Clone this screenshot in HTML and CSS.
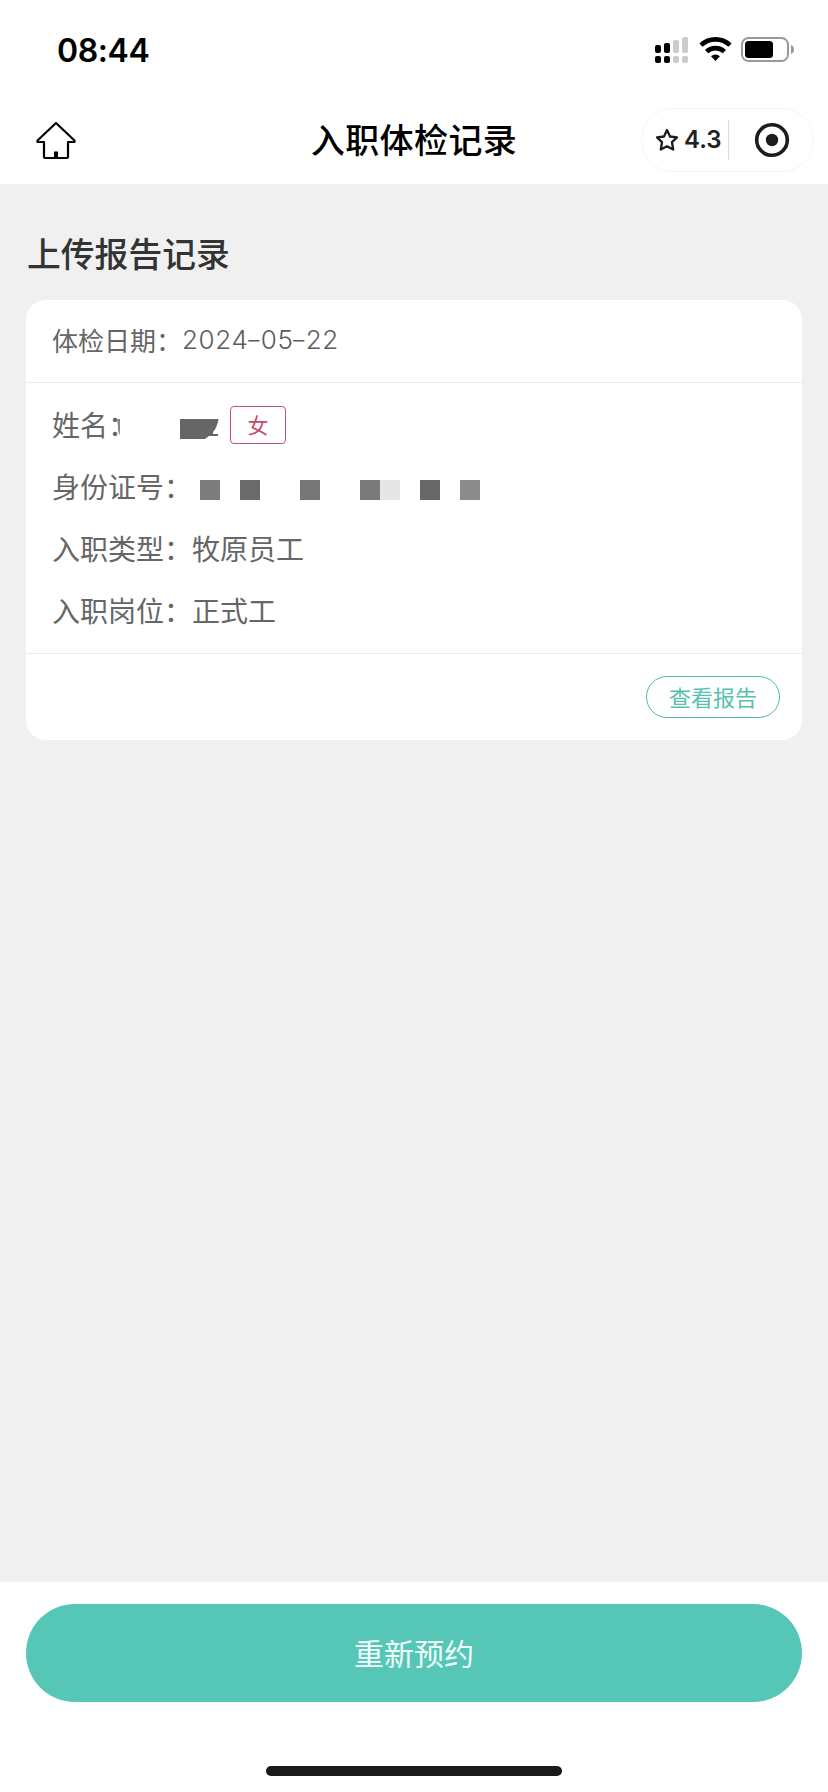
FILE: index.html
```html
<!DOCTYPE html>
<html lang="zh-CN">
<head>
<meta charset="utf-8">
<title>入职体检记录</title>
<link rel="stylesheet" href="styles.css">
</head>
<body>
<div class="app">
  <header class="header">
    <div class="status">
      <span class="time">08:44</span>
      <svg class="status-icons" width="142" height="28" viewBox="0 0 142 28">
        <g fill="#000"><rect x="1" y="9" width="6" height="8" rx="2"/><rect x="10" y="7" width="6" height="10" rx="2"/><rect x="1" y="20" width="6" height="7" rx="2"/><rect x="10" y="20" width="6" height="7" rx="2"/></g>
        <g fill="#ccc"><rect x="19" y="4" width="6" height="13" rx="2"/><rect x="28" y="1" width="6" height="16" rx="2"/><rect x="19" y="20" width="6" height="7" rx="2"/><rect x="28" y="20" width="6" height="7" rx="2"/></g>
        <g fill="none" stroke="#000" stroke-width="4.6"><path d="M47 9.200A21 21 0 0 1 76 9.200"/><path d="M52.600 15.600A13 13 0 0 1 70.400 15.600"/></g>
        <path d="M57 20.300Q61.500 16.800 66 20.300L61.500 25Z"/>
        <rect x="88" y="2" width="46" height="23" rx="6.500" fill="none" stroke="#999" stroke-width="2"/>
        <rect x="91" y="5" width="28" height="17" rx="3.500"/>
        <path d="M137 9Q140 10 140 13.500T137 18Z" fill="#999"/>
      </svg>
    </div>
    <div class="nav">
      <svg class="home" width="42" height="40" viewBox="0 0 42 40" fill="none" stroke="#000" stroke-width="2.200" stroke-linejoin="round"><path d="M21 2 39.500 19.500V21H33V36Q33 37 32 37H10Q9 37 9 36V21H2.500V19.500Z"/><path d="M21 30.500V37" stroke-width="4"/></svg>
      <h1 class="title">入职体检记录</h1>
      <div class="capsule">
        <div class="rating">
          <svg width="24" height="24" viewBox="0 0 24 24" fill="none" stroke="#1c1c1c" stroke-width="2.300" stroke-linejoin="round"><path d="M12 2 15 8.500 22 9.400 17 14.200 18.200 21.500 12 18.300 5.800 21.500 7 14.200 2 9.400 9 8.500Z"/></svg>
          <span>4.3</span>
        </div>
        <svg class="target" width="36" height="36" viewBox="0 0 36 36"><circle cx="18" cy="18" r="15.300" fill="none" stroke="#1c1c1c" stroke-width="3.600"/><circle cx="18" cy="18" r="6.200" fill="#1c1c1c"/></svg>
      </div>
    </div>
  </header>
  <main class="content">
    <h2 class="section-title">上传报告记录</h2>
    <section class="card">
      <div class="date">体检日期：<span class="digits">2024<i class="dash">-</i>05<i class="dash">-</i>22</span></div>
      <div class="details">
        <div class="row"><span class="name-label">姓名：</span>
          <svg class="name-mask" width="106" height="24" viewBox="0 0 106 24" fill="#666"><path d="M4 3H7V19Q4.500 16 5 10Z" fill="#888"/><path d="M67 3H105.500Q104 12 100 16V18H105V20H96L92 23H67Z"/></svg>
          <span class="gender">女</span></div>
        <div class="row"><span>身份证号：</span>
          <svg class="id-mask" width="280" height="20" viewBox="0 0 280 20"><path fill="#7d7d7d" d="M0 0h20v20H0z"/><path fill="#6b6b6b" d="M40 0h20v20H40z"/><path fill="#777" d="M100 0h20v20h-20z"/><path fill="#7a7a7a" d="M160 0h20v20h-20z"/><path fill="#e6e6e6" d="M180 0h20v20h-20z"/><path fill="#686868" d="M220 0h20v20h-20z"/><path fill="#8c8c8c" d="M260 0h20v20h-20z"/></svg></div>
        <div class="row"><span>入职类型：牧原员工</span></div>
        <div class="row"><span>入职岗位：正式工</span></div>
      </div>
      <div class="actions"><button class="view">查看报告</button></div>
    </section>
  </main>
  <footer class="footer">
    <button class="primary">重新预约</button>
    <div class="home-bar"></div>
  </footer>
</div>
</body>
</html>
```
FILE: styles.css
```css
* { box-sizing: border-box; }
body { margin: 0; font-family: "Noto Sans CJK SC", sans-serif; color: #666; background: #fff; }
button { font-family: inherit; padding: 0; }
svg { display: block; flex: none; }
.app { width: 828px; height: 1792px; display: flex; flex-direction: column; }
.header { height: 184px; background: #fff; color: #000; }
.status { height: 98px; padding: 0 32px 0 57px; display: flex; align-items: center; justify-content: space-between; }
.time { font: 600 32px/40px Inter, sans-serif; letter-spacing: -.4px; margin-top: 3px; }
.status-icons { margin-top: 2px; }
.nav { height: 84px; padding: 0 14px 0 35px; display: grid; grid-template-columns: 173px 1fr 173px; align-items: center; }
.title { margin: 0 21px 0 0; text-align: center; font-size: 34px; font-weight: 500; line-height: 48px; letter-spacing: .4px; padding-bottom: 2px; }
.home { margin-top: 1px; }
.capsule { justify-self: end; width: 173px; height: 64px; border: 1px solid #f5f5f5; border-radius: 32px; display: flex; align-items: center; }
.rating { width: 87px; height: 40px; border-right: 1px solid #ddd; display: flex; align-items: center; gap: 5px; padding-left: 13px; font: 600 24px/40px Inter, sans-serif; color: #222; }
.target { margin-left: 25px; }
.content { flex: 1; background: #f0f0f0; padding: 45px 26px 0; }
.section-title { margin: 0; height: 71px; padding-left: 1px; font-size: 33.800px; font-weight: 500; line-height: 48px; color: #333; }
.card { height: 440px; background: #fff; border-radius: 20px; }
.date { height: 83px; padding: 0 0 3px 26px; display: flex; align-items: center; border-bottom: 1px solid #ebebeb; font-size: 26px; }
.digits { font-family: Inter, sans-serif; font-weight: 300; letter-spacing: .6px; color: #5c5c5c; }
.dash { display: inline-block; font-style: normal; transform: scaleX(1.4); }
.details { height: 271px; padding: 11px 26px; border-bottom: 1px solid #ebebeb; font-size: 28px; }
.row { height: 62px; display: flex; align-items: center; }
.row > span:first-child { padding-bottom: 2px; }
.name-label { width: 61px; white-space: nowrap; }
.name-mask { margin-top: 6px; }
.gender { margin-left: 11px; width: 56px; height: 38px; border: 1px solid #c4516f; border-radius: 4px; color: #c9486f; font-size: 21px; line-height: 34px; text-align: center; }
.id-mask { margin: 5px 0 0 8px; }
.actions { height: 86px; padding-right: 22px; display: flex; align-items: center; justify-content: flex-end; }
.view { width: 134px; height: 42px; border: 1px solid #55b9a5; border-radius: 21px; background: #fff; color: #55c1ae; font-size: 22px; line-height: 38px; padding-bottom: 2px; }
.footer { height: 210px; padding: 22px 26px 16px; display: flex; flex-direction: column; align-items: center; justify-content: space-between; background: #fff; }
.primary { width: 776px; height: 98px; border: 0; border-radius: 49px; background: #56c6b6; color: #f2fffd; font-size: 30px; padding-bottom: 3px; }
.home-bar { width: 296px; height: 10px; border-radius: 5px; background: #1a1a1a; }
```
